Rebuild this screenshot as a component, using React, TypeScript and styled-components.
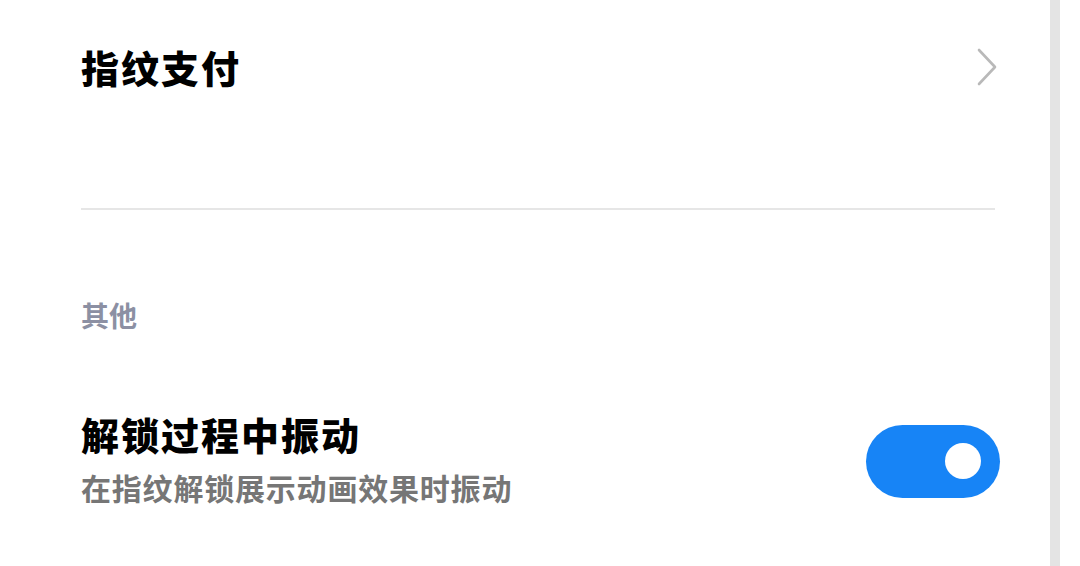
import React from "react";
import styled, { createGlobalStyle } from "styled-components";

const Global = createGlobalStyle`
  html, body { margin: 0; padding: 0; background: #ffffff; }
  body { font-family: "Noto Sans CJK SC", "Noto Sans", sans-serif; }
`;

const Page = styled.div`
  display: flex;
  width: 1080px;
  height: 566px;
  overflow: hidden;
  background: #ffffff;
`;

const Content = styled.div`
  width: 1050px;
  box-sizing: border-box;
  padding: 0 50px 0 81px;
  display: flex;
  flex-direction: column;
`;

const Scrollbar = styled.div`
  width: 10px;
  height: 100%;
  background: #e4e4e4;
`;

const Row = styled.div<{ $h: number; $top?: number }>`
  height: ${(p) => p.$h}px;
  margin-top: ${(p) => p.$top ?? 0}px;
  display: flex;
  align-items: center;
  justify-content: space-between;
`;

const TextCol = styled.div`
  display: flex;
  flex-direction: column;
`;

const Title = styled.div`
  font-size: 38px;
  font-weight: 900;
  color: #000000;
  line-height: 52px;
  letter-spacing: 2px;
`;

const Subtitle = styled.div`
  font-size: 30px;
  font-weight: 700;
  color: #767676;
  line-height: 54px;
  letter-spacing: 0.8px;
`;

const Divider = styled.div`
  height: 2px;
  background: #e6e6e6;
  margin-top: 74px;
  margin-right: 5px;
`;

const SectionHeader = styled.div`
  font-size: 28px;
  font-weight: 700;
  color: #8c90a3;
  line-height: 40px;
  margin-top: 85px;
`;

const Toggle = styled.div<{ $on: boolean }>`
  width: 134px;
  height: 73px;
  border-radius: 37px;
  background: ${(p) => (p.$on ? "#1784f6" : "#d0d0d0")};
  display: flex;
  align-items: center;
  justify-content: ${(p) => (p.$on ? "flex-end" : "flex-start")};
  padding: 0 19px;
  box-sizing: border-box;
`;

const Knob = styled.div`
  width: 36px;
  height: 36px;
  border-radius: 50%;
  background: #ffffff;
`;

const Chevron = () => (
  <svg width="24" height="40" viewBox="0 0 24 40" style={{ marginRight: 1 }}>
    <path d="M4 3 L20 20 L4 37" fill="none" stroke="#b9b9b9" strokeWidth="2.6" strokeLinecap="round" strokeLinejoin="round" />
  </svg>
);

export default function App() {
  return (
    <Page>
      <Global />
      <Content>
        <Row $h={134}>
          <Title>指纹支付</Title>
          <Chevron />
        </Row>
        <Divider />
        <SectionHeader>其他</SectionHeader>
        <Row $h={156} $top={48}>
          <TextCol>
            <Title>解锁过程中振动</Title>
            <Subtitle>在指纹解锁展示动画效果时振动</Subtitle>
          </TextCol>
          <Toggle $on={true}>
            <Knob />
          </Toggle>
        </Row>
      </Content>
      <Scrollbar />
    </Page>
  );
}
